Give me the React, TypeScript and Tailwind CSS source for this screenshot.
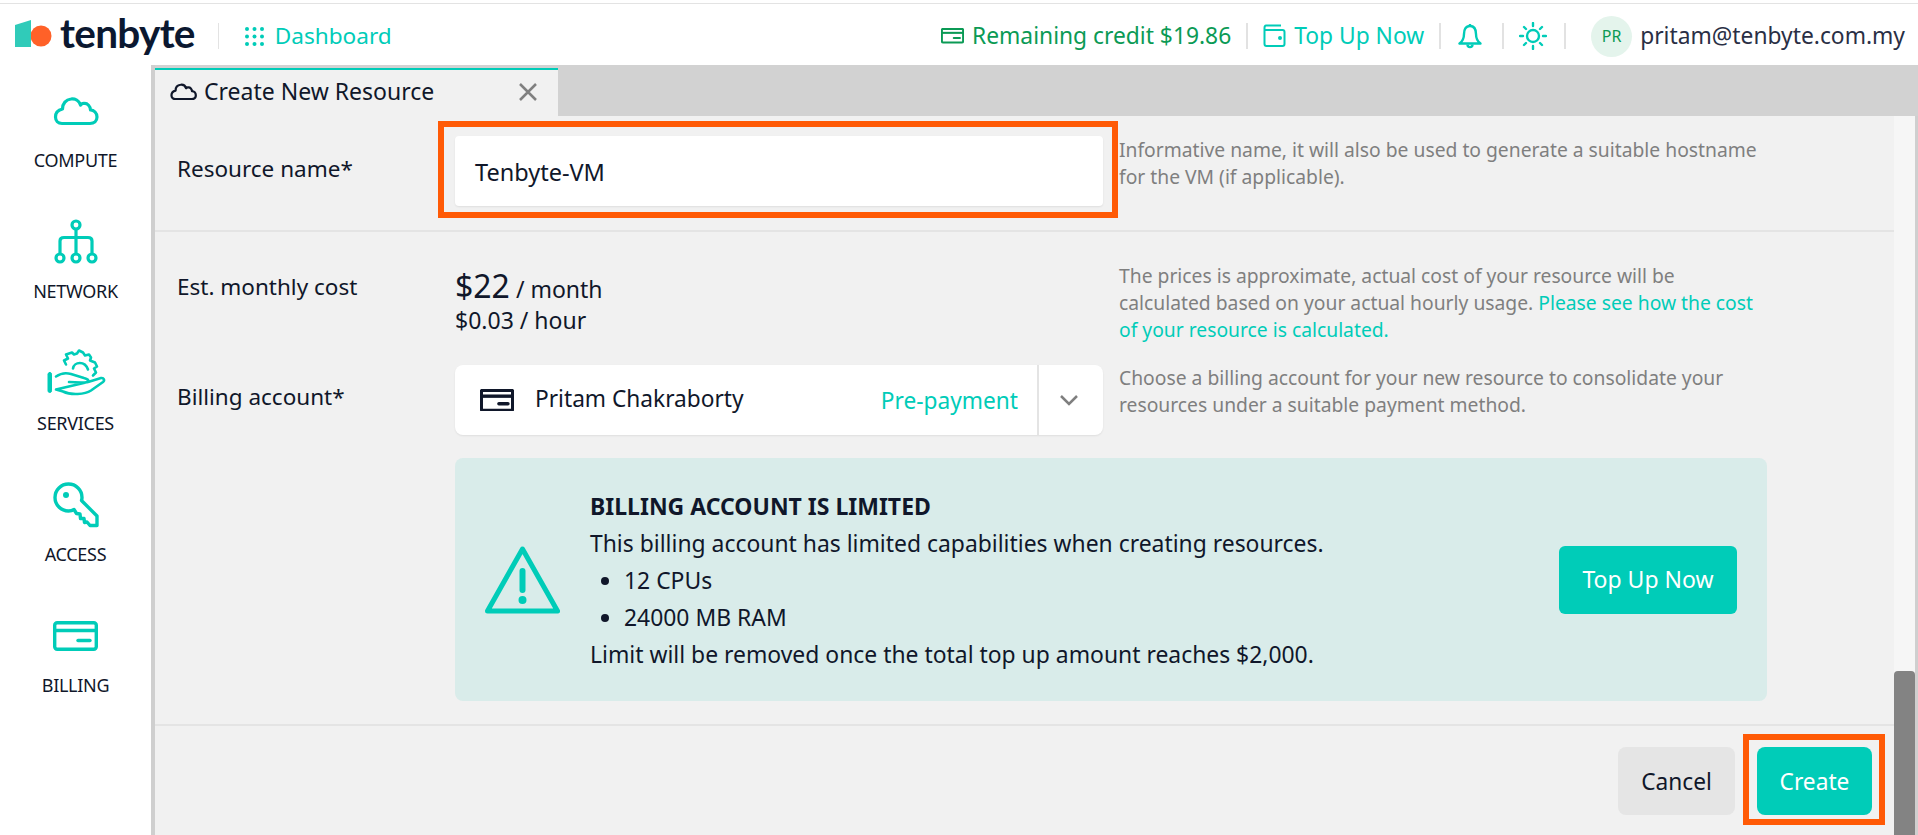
import React from "react";

const TEAL = "#00ccb8";

function Cloud({ size = 46, sw = 3.2, color = TEAL }: { size?: number; sw?: number; color?: string }) {
  return (
    <svg width={size} height={(size * 30) / 46} viewBox="12 4.500 46 30" fill="none" stroke={color} strokeWidth={sw} strokeLinejoin="round" strokeLinecap="round">
      <path d="M21 32 H49 C53 32 56 29.500 56 25.500 C56 21.500 53 18.500 49.500 18.500 C49.500 15 46.500 11.500 43 12 C41.500 11.500 40.500 12.500 39.500 13.500 C38 9 34 7 30 7.500 C25 8 21.500 12 21.500 17.500 C17 18.500 14.500 21.500 14.500 25.500 C14.500 29 17 32 21 32 Z" />
    </svg>
  );
}

function Network() {
  return (
    <svg width="44" height="46" viewBox="0 0 44 46" fill="none" stroke={TEAL} strokeWidth="3.200">
      <circle cx="22" cy="6" r="4" />
      <path d="M22 10 V34" />
      <path d="M6 34 V22 Q6 18.500 10 18.500 H34 Q38 18.500 38 22 V34" />
      <circle cx="6" cy="39" r="4" />
      <circle cx="22" cy="39" r="4" />
      <circle cx="38" cy="39" r="4" />
    </svg>
  );
}

function Services() {
  return (
    <svg className="-translate-y-[1.500px]" width="70" height="55" viewBox="0 0 70 55" fill="none" stroke={TEAL} strokeWidth="2.600" strokeLinejoin="round" strokeLinecap="round">
      <rect x="7" y="28" width="3.500" height="20" rx="1.700" fill={TEAL} strokeWidth="1" />
      <path d="M15 32 C20 28.500 25 28 30 29.500 L43 33.500 C47 34.500 48 36 47 37 C46 38.500 44 38 40 38 L28 37.500 M47 37.500 L52 36 L60 33.500 C63 33 64 36 62 37.500 L50 46 C44 50 30 51 22 47 L15 45 Z" />
      <path d="M25 20 L23 16 L27 14 L25 10 L31 8 L33 10 L36 9 L38 6 L42 8 L44 11 L48 10 L50 13 L49 16 L54 18 L56 22 L53 24 L55 28 L52 31" />
      <path d="M32 24 C33 17 44 16 47 25" />
    </svg>
  );
}

function KeyIcon() {
  return (
    <svg width="46" height="46" viewBox="0 0 46 46" fill="none" stroke={TEAL} strokeWidth="3.400" strokeLinejoin="round">
      <path d="M2 15.500 C2 8 8 2 15.500 2 C23 2 29 8 29 15.500 C29 16.500 28.900 17.500 28.500 18.500 L44 34 V43.500 H37 L34 40 L31.500 40.500 L31 36.500 L27.500 36.500 L27 32 L23.500 31.500 L21 27.500 C19.500 28.500 17.500 29 15.500 29 C8 29 2 23 2 15.500 Z" />
      <circle cx="13" cy="13" r="3" fill={TEAL} stroke="none" />
    </svg>
  );
}

function Card({ color = TEAL, w = 45, sw = 3.400 }: { color?: string; w?: number; sw?: number }) {
  return (
    <svg width={w} height={(w * 30) / 45} viewBox="0 0 45 30" fill="none">
      <rect x="1.700" y="1.700" width="41.600" height="26.600" rx="2.500" stroke={color} strokeWidth={sw} />
      <path d="M2 9.500 H43" stroke={color} strokeWidth={sw} />
      <path d="M25 19.500 H37" stroke={color} strokeWidth={sw} strokeLinecap="round" />
    </svg>
  );
}

function SideItem({ icon, label }: { icon: React.ReactNode; label: string }) {
  return (
    <div className="h-[131.300px] flex flex-col items-center">
      <div className="h-[48px] flex items-center justify-center">{icon}</div>
      <div className="mt-[13px] text-[18px] leading-[24px] tracking-[-0.300px] text-[#10172a]">{label}</div>
    </div>
  );
}

function Sep({ ml }: { ml: string }) {
  return <div className={`w-[2px] h-[26px] bg-[#e2e2e2] ${ml}`} />;
}

export default function App() {
  return (
    <div className="w-[1918px] h-[835px] overflow-hidden flex flex-col bg-white text-[#10172a] font-['Noto_Sans','Open_Sans',sans-serif]">
      <header className="h-[62px] shrink-0 bg-white border-t border-[#e3e3e3] mt-[3px] flex items-center pl-[15px] pr-[13px] pt-[3px]">
        <div className="flex items-center -translate-y-[2px]">
          <svg width="38" height="28" viewBox="0 0 38 28">
            <circle cx="26" cy="16" r="10.500" fill="#ff6128" />
            <path d="M0 5 L16 0 V27 H0 Z" fill="#30cbb9" />
          </svg>
          <span className="ml-[7px] text-[40.500px] leading-none font-bold tracking-[-0.700px] text-[#0b1830] font-['Lato',sans-serif] -translate-y-[1px]">tenbyte</span>
        </div>
        <div className="w-px h-[26px] bg-[#e3e3e3] ml-[23px]" />
        <svg className="ml-[26px]" width="19" height="19" viewBox="0 0 19 19" fill={TEAL}>
          {[2, 9.500, 17].flatMap((y) => [2, 9.500, 17].map((x) => <circle key={`${x}-${y}`} cx={x} cy={y} r="2" />))}
        </svg>
        <span className="ml-[11px] text-[22.600px] text-[#00ccb8]">Dashboard</span>

        <div className="ml-auto flex items-center">
          <Card color="#0b9a55" w={23} sw={4} />
          <span className="ml-[8px] text-[22.800px] text-[#0b9a55]">Remaining credit $19.86</span>
          <Sep ml="ml-[15px]" />
          <svg className="ml-[15px]" width="23" height="24" viewBox="0 0 23 24" fill="none" stroke={TEAL} strokeWidth="2">
            <path d="M3 1.500 H18 M1.500 4 V20 Q1.500 22 3.500 22 H19.500 Q21.500 22 21.500 20 V8 Q21.500 6 19.500 6 H1.500 M1.500 4 Q1.500 1.500 3 1.500" />
            <circle cx="17" cy="14" r="1" fill={TEAL} />
          </svg>
          <span className="ml-[8px] text-[22.800px] text-[#00ccb8]">Top Up Now</span>
          <Sep ml="ml-[15px]" />
          <svg className="ml-[17px]" width="24" height="26" viewBox="0 0 24 26" fill="none" stroke={TEAL} strokeWidth="2.400" strokeLinejoin="round">
            <path d="M12 1 V3 M12 3 C7.500 3 6 7 6 11 C6 15 5 18 1.500 20.500 H22.500 C19 18 18 15 18 11 C18 7 16.500 3 12 3 Z" />
            <path d="M9.500 21.500 C9.500 25 14.500 25 14.500 21.500" />
          </svg>
          <Sep ml="ml-[20px]" />
          <svg className="ml-[15px]" width="28" height="28" viewBox="0 0 28 28" fill="none" stroke={TEAL} strokeWidth="2.400" strokeLinecap="round">
            <circle cx="14" cy="14" r="6" />
            <path d="M14 1 V4 M14 24 V27 M1 14 H4 M24 14 H27 M5 5 L7 7 M21 21 L23 23 M5 23 L7 21 M21 7 L23 5" />
          </svg>
          <Sep ml="ml-[17px]" />
          <div className="ml-[25px] w-[41px] h-[41px] rounded-full bg-[#e4f4ec] flex items-center justify-center text-[16px] text-[#0b9a55]">PR</div>
          <span className="ml-[8px] text-[22.800px] text-[#2a2f45]">pritam@tenbyte.com.my</span>
        </div>
      </header>

      <div className="flex flex-1 min-h-0">
        <aside className="w-[155px] shrink-0 bg-white border-r-[4px] border-[#cfcfcf] pt-[22px]">
          <SideItem icon={<Cloud />} label="COMPUTE" />
          <SideItem icon={<Network />} label="NETWORK" />
          <SideItem icon={<Services />} label="SERVICES" />
          <SideItem icon={<KeyIcon />} label="ACCESS" />
          <SideItem icon={<Card />} label="BILLING" />
        </aside>

        <main className="flex-1 min-w-0 flex flex-col">
          <div className="h-[51px] shrink-0 bg-[#d2d2d2] pt-[3px] flex">
            <div className="w-[403px] bg-[#f1f1f1] border-t-[2px] border-[#00ccb8] pl-[15px] pr-[21px] pb-[3px] flex items-center">
              <Cloud size={27} sw={3.800} color="#10172a" />
              <span className="ml-[7px] text-[23px]">Create New Resource</span>
              <svg className="ml-auto" width="18" height="18" viewBox="0 0 18 18" stroke="#808080" strokeWidth="2.500">
                <path d="M1 1 L17 17 M17 1 L1 17" />
              </svg>
            </div>
          </div>

          <div className="flex-1 min-h-0 flex">
            <div className="flex-1 min-w-0 bg-[#f1f1f1] flex flex-col">
              <section className="h-[116px] shrink-0 border-b-[2px] border-[#e4e4e4] pl-[22px] pt-[20px] flex">
                <div className="w-[278px] text-[22.500px] leading-[28px] pt-[19px]">Resource name*</div>
                <div className="relative w-[648px] h-[70px] bg-white rounded-[4px] shadow-[0_1px_2px_rgba(0,0,0,0.08)] flex items-center px-[20px] pt-[4px] text-[23.500px]">
                  Tenbyte-VM
                  <div className="absolute -top-[15px] -bottom-[12px] -left-[17px] -right-[15px] border-[6px] border-[#ff5a06]" />
                </div>
                <p className="ml-[16px] w-[650px] text-[19.300px] leading-[27px] text-[#7f7f7f]">Informative name, it will also be used to generate a suitable hostname for the VM (if applicable).</p>
              </section>

              <section className="flex-1 min-h-0 pl-[22px] pt-[31px] flex flex-col">
                <div className="flex h-[102px]">
                  <div className="w-[278px] text-[22.500px] leading-[28px] pt-[10px]">Est. monthly cost</div>
                  <div className="w-[648px]">
                    <div className="leading-[36px] pt-[5px] text-[23px]"><span className="text-[32px]">$22</span> / month</div>
                    <div className="text-[23px] leading-[26px]">$0.03 / hour</div>
                  </div>
                  <p className="ml-[16px] w-[650px] text-[19.300px] leading-[27px] text-[#7f7f7f] -mt-[1px]">
                    The prices is approximate, actual cost of your resource will be calculated based on your actual hourly usage. <span className="text-[#00ccb8]">Please see how the cost of your resource is calculated.</span>
                  </p>
                </div>

                <div className="flex h-[70px]">
                  <div className="w-[278px] text-[22.500px] leading-[28px] pt-[18px]">Billing account*</div>
                  <div className="w-[648px] h-[70px] bg-white rounded-[8px] shadow-[0_1px_2px_rgba(0,0,0,0.08)] flex items-center">
                    <div className="ml-[25px] flex"><Card color="#10172a" w={34} sw={4.500} /></div>
                    <span className="ml-[21px] text-[22.700px] -translate-y-[1px]">Pritam Chakraborty</span>
                    <span className="ml-auto text-[22.700px] text-[#00ccb8] pt-[2px]">Pre-payment</span>
                    <div className="ml-[19px] w-[2px] h-full bg-[#e4e4e4]" />
                    <div className="w-[60px] flex justify-center mr-[4px]">
                      <svg width="20" height="12" viewBox="0 0 20 12" fill="none" stroke="#7f7f7f" strokeWidth="2.500">
                        <path d="M2 2 L10 10 L18 2" />
                      </svg>
                    </div>
                  </div>
                  <p className="ml-[16px] w-[650px] text-[19.300px] leading-[27px] text-[#7f7f7f] -mt-[1px]">Choose a billing account for your new resource to consolidate your resources under a suitable payment method.</p>
                </div>

                <div className="ml-[278px] mt-[23px] w-[1312px] h-[243px] shrink-0 bg-[#d9ecea] rounded-[8px] flex items-center pl-[30px] pr-[30px]">
                  <svg width="75" height="68" viewBox="0 0 75 68" fill="none" stroke={TEAL} strokeLinecap="round" strokeLinejoin="round" className="shrink-0">
                    <path d="M37.500 3 L72.500 65 H2.500 Z" strokeWidth="5" />
                    <path d="M37.500 25 V44" strokeWidth="6" />
                    <circle cx="37.500" cy="54" r="2" fill={TEAL} strokeWidth="4" />
                  </svg>
                  <div className="ml-[30px] flex-1 text-[22.900px] leading-[37px] pt-[2px]">
                    <div className="font-bold text-[23px]">BILLING ACCOUNT IS LIMITED</div>
                    <div>This billing account has limited capabilities when creating resources.</div>
                    <ul className="list-disc pl-[34px]">
                      <li>12 CPUs</li>
                      <li>24000 MB RAM</li>
                    </ul>
                    <div>Limit will be removed once the total top up amount reaches $2,000.</div>
                  </div>
                  <div className="w-[178px] h-[68px] rounded-[6px] bg-[#00ccb8] text-white text-[23px] flex items-center justify-center">Top Up Now</div>
                </div>
              </section>

              <footer className="h-[111px] shrink-0 border-t-[2px] border-[#e4e4e4] flex justify-end pt-[21px] pr-[22px]">
                <div className="w-[117px] h-[68px] rounded-[8px] bg-[#e5e5e5] text-[22.700px] pt-[2px] flex items-center justify-center">Cancel</div>
                <div className="relative ml-[22px] w-[115px] h-[68px] rounded-[8px] bg-[#00ccb8] text-white text-[22.700px] pt-[2px] flex items-center justify-center">
                  Create
                  <div className="absolute -top-[13px] -bottom-[10px] -left-[14px] -right-[13px] border-[6px] border-[#ff5a06]" />
                </div>
              </footer>
            </div>

            <div className="w-[24px] shrink-0 bg-[#f6f6f6] border-r-[3px] border-[#cfcfcf] flex flex-col justify-end">
              <div className="h-[164px] bg-[#838383] rounded-t-[4px]" />
            </div>
          </div>
        </main>
      </div>
    </div>
  );
}
